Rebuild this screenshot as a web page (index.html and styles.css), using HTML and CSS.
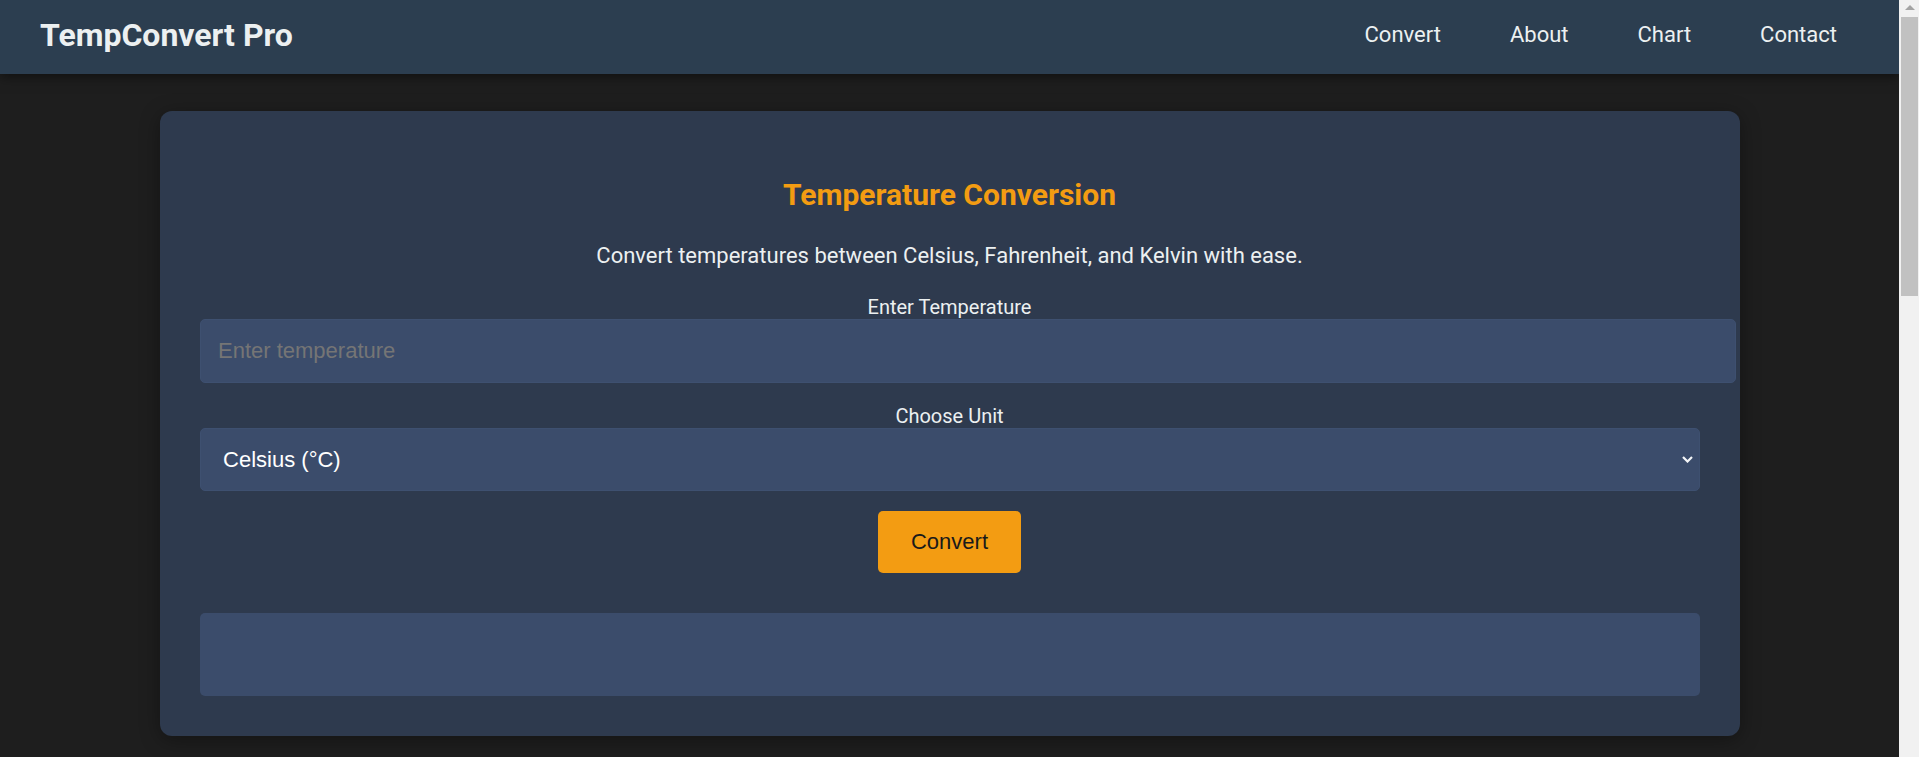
FILE: index.html
```html
<!DOCTYPE html>
<html lang="en">
<head>
<meta charset="utf-8">
<title>TempConvert Pro</title>
<link rel="stylesheet" href="styles.css">
</head>
<body>
<header class="site-header">
  <div class="logo">TempConvert Pro</div>
  <nav class="nav">
    <a href="#convert">Convert</a>
    <a href="#about">About</a>
    <a href="#chart">Chart</a>
    <a href="#contact">Contact</a>
  </nav>
</header>
<main class="main">
  <section class="card converter" id="convert">
    <h2 class="card-title">Temperature Conversion</h2>
    <p class="subtitle">Convert temperatures between Celsius, Fahrenheit, and Kelvin with ease.</p>
    <label class="field-label" for="temp">Enter Temperature</label>
    <input class="text-input" id="temp" type="number" placeholder="Enter temperature">
    <label class="field-label" for="unit">Choose Unit</label>
    <div class="select-wrap">
      <select class="select-input" id="unit">
        <option>Celsius (°C)</option>
        <option>Fahrenheit (°F)</option>
        <option>Kelvin (K)</option>
      </select>
      <svg class="select-arrow" width="11" height="7" viewBox="0 0 11 7" aria-hidden="true">
        <path d="M1 1 L5.5 5.5 L10 1" fill="none" stroke="#f4f6f8" stroke-width="2.2"/>
      </svg>
    </div>
    <div class="actions">
      <button class="convert-btn" type="button">Convert</button>
    </div>
    <div class="result"></div>
  </section>

  <section class="card info" id="about">
    <h2 class="card-title">About Temperature Scales</h2>
    <p class="info-text">Celsius is based on the freezing and boiling points of water. Fahrenheit is used mainly in the United States, and Kelvin is the SI unit of temperature, starting at absolute zero.</p>
    <p class="info-text">Use the converter above to switch between all three scales instantly.</p>
  </section>

  <section class="card info" id="chart">
    <h2 class="card-title">Conversion Chart</h2>
    <table class="chart">
      <thead><tr><th>Celsius (°C)</th><th>Fahrenheit (°F)</th><th>Kelvin (K)</th></tr></thead>
      <tbody>
        <tr><td>-40</td><td>-40</td><td>233.15</td></tr>
        <tr><td>0</td><td>32</td><td>273.15</td></tr>
        <tr><td>25</td><td>77</td><td>298.15</td></tr>
        <tr><td>37</td><td>98.6</td><td>310.15</td></tr>
        <tr><td>100</td><td>212</td><td>373.15</td></tr>
      </tbody>
    </table>
  </section>

  <section class="card info" id="contact">
    <h2 class="card-title">Contact</h2>
    <p class="info-text">Have questions or feedback? Reach us at support@tempconvert.pro</p>
  </section>
</main>
<footer class="footer">© 2024 TempConvert Pro. All rights reserved.</footer>

<div class="scrollbar" aria-hidden="true">
  <div class="scroll-up">
    <svg width="10" height="5" viewBox="0 0 10 5"><path d="M0 5 L5 0 L10 5 Z" fill="#a3a3a3"/></svg>
  </div>
  <div class="scroll-thumb"></div>
</div>
</body>
</html>
```

FILE: styles.css
```css
* {
  box-sizing: content-box;
}

html, body {
  margin: 0;
  padding: 0;
}

body {
  padding-right: 20px;
  background: #1e1e1e;
  color: #ecf0f1;
  font-family: Roboto, "Noto Sans", sans-serif;
}

/* window scrollbar, drawn over the right edge */
.scrollbar {
  position: fixed;
  top: 0;
  right: 0;
  width: 20px;
  height: 100vh;
  background: #f1f1f1;
  z-index: 10;
}

.scroll-up {
  height: 17px;
  display: flex;
  justify-content: center;
  align-items: flex-start;
  padding-left: 1px;
}

.scroll-up svg {
  display: block;
  margin-top: 5px;
}

.scroll-thumb {
  height: 279px;
  margin: 0 1px 0 2px;
  background: #c1c1c1;
}

.site-header {
  height: 69px;
  padding: 0 62px 5px 40px;
  background: #2c3e50;
  display: flex;
  align-items: center;
  justify-content: space-between;
  box-shadow: 0 2px 12px rgba(0, 0, 0, 0.55);
  position: relative;
  z-index: 1;
}

.logo {
  font-size: 32px;
  font-weight: 700;
  color: #ecf0f1;
}

.nav {
  display: flex;
  gap: 69px;
}

.nav a {
  color: #ecf0f1;
  text-decoration: none;
  font-size: 22px;
}

.main {
  padding: 37px 0 20px;
}

.card {
  width: 1500px;
  margin: 0 auto;
  padding: 40px;
  background: #2e3a4e;
  border-radius: 12px;
  box-shadow: 0 4px 20px rgba(0, 0, 0, 0.35);
}

.converter {
  text-align: center;
}

.card-title {
  margin: 20px 0 19.2px;
  font-size: 30px;
  line-height: 1.6;
  font-weight: 700;
  color: #f39c12;
  text-align: center;
}

.subtitle {
  margin: 0 0 22px;
  font-size: 22px;
  line-height: 1.6;
}

.field-label {
  display: block;
  font-size: 20px;
  line-height: normal;
  text-align: center;
}

.text-input {
  display: block;
  width: 100%;
  margin: 0 0 21px;
  padding: 18px 16.5px 18px 17.5px;
  border: 1px solid #3e5070;
  border-radius: 5px;
  background: #3b4c6b;
  color: #ffffff;
  font-family: "Liberation Sans", Arial, sans-serif;
  font-size: 22px;
  outline: none;
}

.select-wrap {
  position: relative;
  margin: 0 0 20px;
}

.select-input {
  display: block;
  box-sizing: border-box;
  width: 100%;
  height: 63px;
  margin: 0;
  padding: 0 30px 0 22.6px;
  border: 1px solid #3e5070;
  border-radius: 5px;
  background-color: #3b4c6b;
  color: #ffffff;
  font-family: "Liberation Sans", Arial, sans-serif;
  font-size: 22px;
  appearance: none;
  -webkit-appearance: none;
}

.select-arrow {
  position: absolute;
  right: 7px;
  top: 28px;
  pointer-events: none;
}

.actions {
  display: flex;
  justify-content: center;
}

.convert-btn {
  padding: 18px 33px;
  border: none;
  border-radius: 5px;
  background: #f39c12;
  color: #1a1a1a;
  font-family: "Liberation Sans", Arial, sans-serif;
  font-size: 22px;
  line-height: normal;
}

.result {
  box-sizing: border-box;
  height: 83px;
  margin-top: 40px;
  border-radius: 5px;
  background: #3b4c6b;
}

.info {
  margin-top: 40px;
}

.info-text {
  font-size: 20px;
  line-height: 1.6;
  margin: 0 0 16px;
}

.chart {
  width: 100%;
  border-collapse: collapse;
  font-size: 20px;
}

.chart th, .chart td {
  padding: 14px;
  border-bottom: 1px solid #3b4c6b;
  text-align: center;
}

.chart th {
  color: #f39c12;
}

.footer {
  padding: 24px 0 53px;
  text-align: center;
  font-size: 16px;
  color: #9aa5b1;
}
```
